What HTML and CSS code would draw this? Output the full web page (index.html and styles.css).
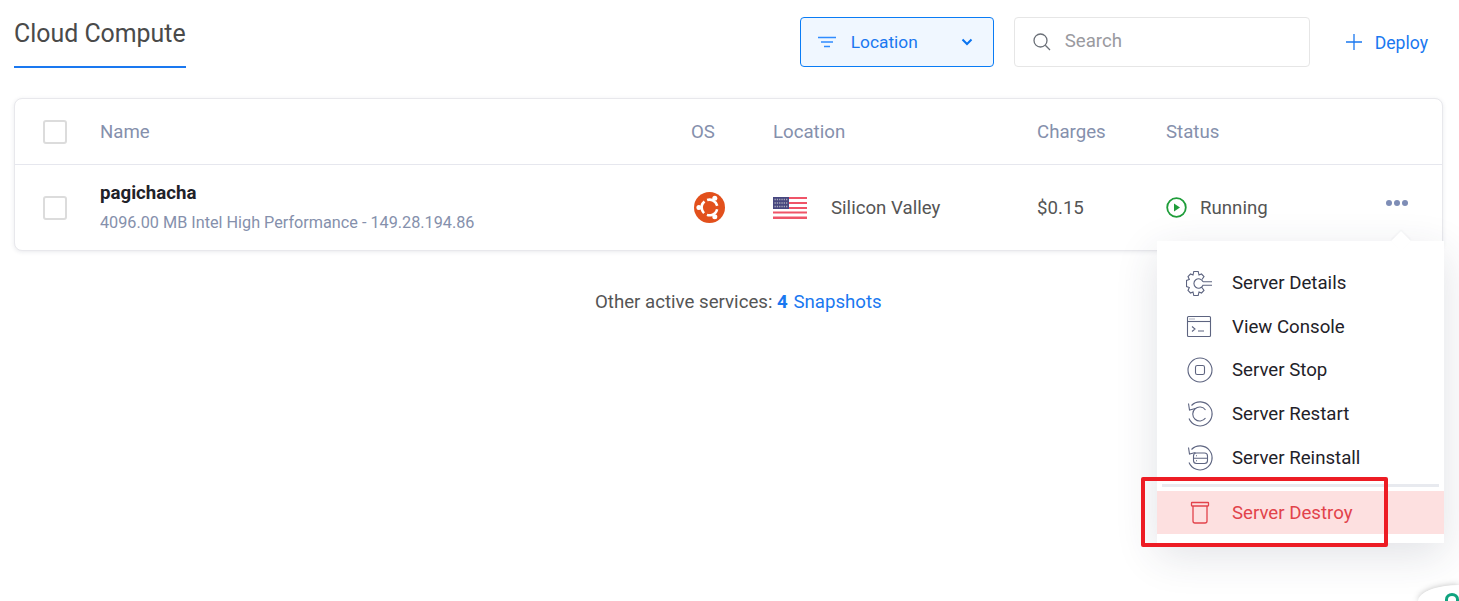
FILE: index.html
```html
<!DOCTYPE html>
<html lang="en">
<head>
<meta charset="utf-8">
<title>Cloud Compute</title>
<link rel="stylesheet" href="styles.css">
</head>
<body>
<div class="page">
  <header class="topbar">
    <h1 class="title">Cloud Compute</h1>
    <div class="tools">
      <button class="loc-btn">
        <svg class="filter-ico" width="18" height="12" viewBox="0 0 18 12" fill="none" stroke="#2f8cff" stroke-width="1.4"><path d="M0 1.500h18M3 6h12M6 10.500h6"/></svg>
        <span class="loc-label">Location</span>
        <svg width="12" height="8" viewBox="0 0 12 8" fill="none" stroke="#0a74f0" stroke-width="2"><path d="M1.500 1.500 6 6l4.500-4.500"/></svg>
      </button>
      <div class="search">
        <svg width="20" height="20" viewBox="0 0 20 20" fill="none" stroke="#6b7078" stroke-width="1.3"><circle cx="8.500" cy="8.500" r="6.500"/><path d="m13.300 13.300 4.700 4.700"/></svg>
        <span class="search-text">Search</span>
      </div>
      <a class="deploy">
        <svg width="16" height="16" viewBox="0 0 16 16" fill="none" stroke="#1a78f0" stroke-width="1.3"><path d="M8 0v16M0 8h16"/></svg>
        <span>Deploy</span>
      </a>
    </div>
  </header>

  <section class="card">
    <div class="row head">
      <span class="check"></span>
      <span>Name</span>
      <span>OS</span>
      <span>Location</span>
      <span>Charges</span>
      <span>Status</span>
    </div>
    <div class="row body">
      <span class="check"></span>
      <div class="srv">
        <div class="srv-name">pagichacha</div>
        <div class="srv-sub">4096.00 MB Intel High Performance - 149.28.194.86</div>
      </div>
      <svg class="os" width="31" height="31" viewBox="0 0 31 31">
        <circle cx="15.500" cy="15.500" r="15.500" fill="#e2501c"/>
        <circle cx="15.500" cy="15.500" r="7.800" fill="none" stroke="#fff" stroke-width="2.600" stroke-dasharray="13 3.340" transform="rotate(-107.750 15.500 15.500)"/>
        <circle cx="20.800" cy="6.300" r="2.500" fill="#fff"/>
        <circle cx="20.800" cy="24.700" r="2.500" fill="#fff"/>
        <circle cx="4.900" cy="15.500" r="2.500" fill="#fff"/>
      </svg>
      <div class="loc">
        <svg width="34" height="22" viewBox="0 0 34 22">
          <rect width="34" height="22" fill="#fff"/>
          <path d="M0 0h34v2H0zM0 5h34v2H0zM0 10h34v2H0zM0 14.500h34v2H0zM0 19.500h34V22H0z" fill="#ef5468"/>
          <rect width="16" height="12" fill="#47477f"/>
          <path d="M1.500 2.500h13M1.500 6h13M1.500 9.500h13" stroke="#aab" stroke-width="1.300" stroke-dasharray="1.300 1"/>
        </svg>
        <span>Silicon Valley</span>
      </div>
      <span class="charge">$0.15</span>
      <div class="status">
        <svg width="21" height="21" viewBox="0 0 21 21"><circle cx="10.500" cy="10.500" r="9.300" fill="none" stroke="#1f9d3a" stroke-width="1.800"/><path d="M8 6.500v8l6-4z" fill="#1f9d3a"/></svg>
        <span>Running</span>
      </div>
      <div class="dots"><i></i><i></i><i></i></div>
    </div>
  </section>

  <p class="other">Other active services: <b>4</b> <a>Snapshots</a></p>
</div>

<div class="menu">
  <span class="caret"></span>
  <ul class="menu-list">
    <li class="item">
      <svg class="ico" width="28" height="28" viewBox="0 0 28 28" fill="none" stroke="#5d6480" stroke-width="1.100"><path d="M16 10.500l2-3-2.500-2.500-2.500 1-.8-3.500H7.800L7 6 4.500 5 2 7.500l1.300 3-2.800 1v6l2.800 1-1.300 3L4.500 24l2.500-1 .8 3.500h4.400l.8-3.500 2.500 1 2.500-2.500-2-3"/><path d="M17 12.800a4.700 4.700 0 1 0 0 3.400h9M17 12.800h9"/></svg>
      <span>Server Details</span>
    </li>
    <li class="item">
      <svg class="ico" width="28" height="28" viewBox="0 0 28 28" fill="none" stroke="#5d6480" stroke-width="1.100"><rect x="1.500" y="3.500" width="23" height="20" rx="1"/><path d="M1.500 8.500h23"/><path d="M3.500 6h1M5.500 6h1M7.500 6h1"/><path d="m6 13.500 3 2.500-3 2.500M12 18h6"/></svg>
      <span>View Console</span>
    </li>
    <li class="item">
      <svg class="ico" width="28" height="28" viewBox="0 0 28 28" fill="none" stroke="#5d6480" stroke-width="1.100"><circle cx="14" cy="14" r="12"/><rect x="9.500" y="9.500" width="9" height="9" rx="1.800"/></svg>
      <span>Server Stop</span>
    </li>
    <li class="item">
      <svg class="ico" width="28" height="28" viewBox="0 0 28 28" fill="none" stroke="#5d6480" stroke-width="1.100"><path d="M5.500 5.500A12 12 0 1 1 3 18.500M2.500 3.500l1 6.500 6-1.500"/><path d="M19.500 10a7 7 0 1 0 0 8"/></svg>
      <span>Server Restart</span>
    </li>
    <li class="item">
      <svg class="ico" width="28" height="28" viewBox="0 0 28 28" fill="none" stroke="#5d6480" stroke-width="1.100"><path d="M5.500 5.500A12 12 0 1 1 3 18.500M2.500 3.500l1 6.500 6-1.500"/><rect x="7.500" y="9" width="14" height="10.500" rx="3"/><path d="M7.500 14.200h14M10 11.700h1M10 16.800h1"/></svg>
      <span>Server Reinstall</span>
    </li>
  </ul>
  <div class="divider"></div>
  <div class="item danger">
    <svg class="ico" width="28" height="28" viewBox="0 0 28 28" fill="none" stroke="#e2434b" stroke-width="1.300"><rect x="5.500" y="4.500" width="17" height="3.500" rx=".5"/><path d="M7 8v15a2 2 0 0 0 2 2h10a2 2 0 0 0 2-2V8"/></svg>
    <span class="danger-label">Server Destroy</span>
  </div>
</div>

<div class="annotation"></div>
<div class="widget"><svg class="widget-ico" width="14" height="8" viewBox="0 0 14 8" fill="none" stroke="#10a37f" stroke-width="3"><path d="M1.500 8V6.500a5.500 5 0 0 1 11 0V8"/></svg></div>
</body>
</html>
```
FILE: styles.css
```css
* { box-sizing: border-box; }
html, body { margin: 0; height: 601px; overflow: hidden; }
body {
  position: relative;
  background: #fff;
  font-family: Roboto, "Liberation Sans", sans-serif;
  color: #555;
}
.page { padding: 0 16px 0 14px; }

.topbar {
  display: flex;
  justify-content: space-between;
  height: 98px;
}
.title {
  margin: 0;
  height: 68px;
  padding-top: 20px;
  border-bottom: 2px solid #1a78f0;
  font-size: 24.900px;
  line-height: 28px;
  font-weight: 400;
  color: #4a4a4a;
}
.tools {
  display: flex;
  align-items: flex-start;
  padding-top: 17px;
  padding-right: 15px;
}
.loc-btn {
  width: 194px;
  height: 50px;
  display: flex;
  align-items: center;
  padding: 0 20px 0 17px;
  background: #f0f7ff;
  border: 1px solid #0a7cf5;
  border-radius: 4px;
  font: inherit;
  font-size: 17.330px;
  color: #1a78f0;
}
.loc-label { flex: 1; text-align: left; margin-left: 15px; padding-bottom: 1px; }
.search {
  width: 296px;
  height: 50px;
  margin-left: 20px;
  display: flex;
  align-items: center;
  gap: 13px;
  padding-left: 17px;
  border: 1px solid #e6e6e6;
  border-radius: 4px;
}
.search-text { font-size: 18.670px; color: #9a9a9f; padding-bottom: 2px; }
.deploy {
  margin-left: 36px;
  height: 50px;
  display: flex;
  align-items: center;
  gap: 13px;
  color: #1a78f0;
}
.deploy span { font-size: 17.600px; padding-top: 2px; }

.card {
  width: 1429px;
  background: #fff;
  border: 1px solid #e8e8ec;
  border-radius: 8px;
  box-shadow: 0 1px 4px rgba(40, 50, 80, .1);
}
.row {
  display: grid;
  grid-template-columns: 57px 591px 82px 264px 129px 220px 1fr;
  align-items: center;
  padding-left: 28px;
  font-size: 18.670px;
}
.head {
  height: 66px;
  border-bottom: 1px solid #e6e7ee;
  color: #8590ac;
}
.body { height: 85px; color: #555; }
.check {
  width: 24px;
  height: 24px;
  border: 2px solid #dcdcdc;
  border-radius: 3px;
}
.srv { padding-bottom: 2px; }
.srv-name { font-weight: 700; color: #1f2229; margin-bottom: 8px; line-height: 24px; }
.srv-sub { font-size: 16.230px; color: #8590ac; line-height: 20px; }
.os { margin-left: 3px; }
.loc { display: flex; align-items: center; gap: 24px; }
.status { display: flex; align-items: center; gap: 13px; }
.dots { display: flex; gap: 2px; margin-top: -10px; }
.dots i { width: 6px; height: 6px; border-radius: 50%; background: #7e8db6; }

.other {
  margin: 39px 0 0;
  padding-left: 581px;
  font-size: 18.670px;
  line-height: 24px;
  color: #555;
}
.other b, .other a { color: #1a78f0; }
.other a { margin-left: 1px; }

.menu {
  position: absolute;
  left: 1157px;
  top: 241px;
  width: 287px;
  height: 302px;
  padding-top: 20px;
  background: #fff;
  box-shadow: 0 12px 40px rgba(40, 50, 80, .14);
}
.caret {
  position: absolute;
  left: 237px;
  top: -7px;
  width: 14px;
  height: 14px;
  background: #fff;
  transform: rotate(45deg);
  box-shadow: -1px -1px 2px rgba(40, 50, 80, .05);
}
.menu-list { list-style: none; margin: 0; padding: 0; }
.item {
  display: flex;
  align-items: center;
  height: 43.750px;
  padding-left: 29px;
  gap: 18px;
  font-size: 18.670px;
  color: #1f2229;
}
.divider {
  height: 3px;
  margin: 4px 5px;
  background: #e8eaef;
}
.item.danger { height: 43px; background: #fde0e0; color: #e2434b; }
.danger-label { padding-top: 1px; }

.annotation {
  position: absolute;
  left: 1141px;
  top: 477px;
  width: 247px;
  height: 70px;
  border: 4px solid #ed1c24;
  border-radius: 2px;
}
.widget {
  position: absolute;
  right: 0;
  bottom: 0;
  width: 41px;
  height: 16px;
  padding: 8px 0 0 27px;
  overflow: hidden;
  background: #fff;
  border-radius: 41px 0 0 0 / 16px 0 0 0;
  box-shadow: 0 0 6px rgba(0, 0, 0, .25);
}
.widget-ico { display: block; }
```
